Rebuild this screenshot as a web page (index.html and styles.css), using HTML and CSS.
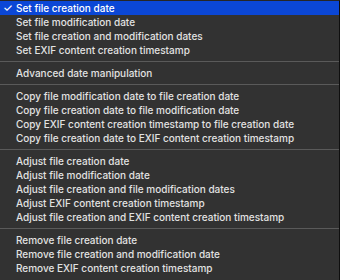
FILE: index.html
```html
<!DOCTYPE html>
<html lang="en">
<head>
    <meta charset="UTF-8">
    <title>Date menu</title>
    <link rel="stylesheet" href="styles.css">
</head>
<body>
    <div class="menu">
        <div class="menu-item selected"><span class="check">✓</span>Set file creation date</div>
        <div class="menu-item">Set file modification date</div>
        <div class="menu-item">Set file creation and modification dates</div>
        <div class="menu-item">Set EXIF content creation timestamp</div>
        <div class="separator"></div>
        <div class="menu-item">Advanced date manipulation</div>
        <div class="separator"></div>
        <div class="menu-item">Copy file modification date to file creation date</div>
        <div class="menu-item">Copy file creation date to file modification date</div>
        <div class="menu-item">Copy EXIF content creation timestamp to file creation date</div>
        <div class="menu-item">Copy file creation date to EXIF content creation timestamp</div>
        <div class="separator"></div>
        <div class="menu-item">Adjust file creation date</div>
        <div class="menu-item">Adjust file modification date</div>
        <div class="menu-item">Adjust file creation and file modification dates</div>
        <div class="menu-item">Adjust EXIF content creation timestamp</div>
        <div class="menu-item">Adjust file creation and EXIF content creation timestamp</div>
        <div class="separator"></div>
        <div class="menu-item">Remove file creation date</div>
        <div class="menu-item">Remove file creation and modification date</div>
        <div class="menu-item">Remove EXIF content creation timestamp</div>
    </div>
</body>
</html>
```

FILE: styles.css
```css
body {
    margin: 0;
    background: #323232;
    font-family: Inter, "Noto Sans", sans-serif;
}
.menu {
    width: 339px;
    height: 280px;
    overflow: hidden;
    background: #323232;
    border-top: 1px solid #262626;
    border-right: 1px solid #0e0e0e;
}
.menu-item {
    position: relative;
    height: 14px;
    line-height: 14px;
    padding-left: 16px;
    font-size: 10px;
    font-weight: 500;
    color: #e2e2e2;
    white-space: nowrap;
}
.menu-item.selected {
    background: #0b47d6;
    color: #ffffff;
}
.check {
    position: absolute;
    left: 3px;
    top: 0;
    font-size: 11px;
}
.separator {
    height: 1px;
    margin: 4px 0 4px;
    background: #5a5a5a;
}
```
